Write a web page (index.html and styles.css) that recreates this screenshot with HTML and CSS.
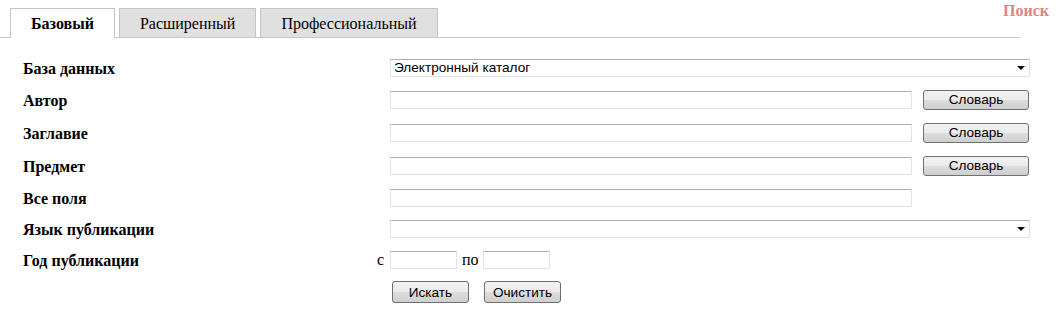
FILE: index.html
```html
<!DOCTYPE html>
<html lang="ru">
<head>
<meta charset="utf-8">
<title>Поиск</title>
<link rel="stylesheet" href="styles.css">
</head>
<body>
<div class="page">
  <div class="top">
    <div class="tabs">
      <div class="tab active">Базовый</div>
      <div class="tab">Расширенный</div>
      <div class="tab">Профессиональный</div>
    </div>
    <div class="brand">Поиск</div>
  </div>
  <form class="form">
    <div class="label">База данных</div><div class="pre"></div>
    <div class="field"><div class="select wide">Электронный каталог<span class="arrow"></span></div></div>

    <div class="label tall">Автор</div><div class="pre"></div>
    <div class="field tall"><input class="text" type="text"><button type="button" class="btn dict">Словарь</button></div>

    <div class="label tall">Заглавие</div><div class="pre"></div>
    <div class="field tall"><input class="text" type="text"><button type="button" class="btn dict">Словарь</button></div>

    <div class="label tall">Предмет</div><div class="pre"></div>
    <div class="field tall"><input class="text" type="text"><button type="button" class="btn dict">Словарь</button></div>

    <div class="label">Все поля</div><div class="pre"></div>
    <div class="field"><input class="text" type="text"></div>

    <div class="label">Язык публикации</div><div class="pre"></div>
    <div class="field"><div class="select wide"><span class="arrow"></span></div></div>

    <div class="label">Год публикации</div><div class="pre">с</div>
    <div class="field"><input class="year" type="text"><span class="po">по</span><input class="year" type="text"></div>

    <div></div><div></div>
    <div class="actions"><button type="button" class="btn act">Искать</button><button type="button" class="btn act">Очистить</button></div>
  </form>
</div>
</body>
</html>
```
FILE: styles.css
```css
html, body {
  margin: 0;
  padding: 0;
  background: #fff;
}
body {
  font-family: "Liberation Serif", "Times New Roman", serif;
  color: #000;
}
.page {
  width: 1056px;
}
.top {
  display: flex;
  align-items: flex-start;
  height: 38px;
}
.tabs {
  display: flex;
  gap: 4px;
  width: 1020px;
  flex: none;
  padding-left: 10px;
  padding-top: 8px;
  border-bottom: 1px solid #c8c8c8;
  box-sizing: border-box;
  height: 38px;
}
.tab {
  height: 29px;
  box-sizing: border-box;
  padding: 0 20px;
  border: 1px solid #c4c4c4;
  border-bottom: none;
  background: #e0e0e0;
  font-size: 16px;
  line-height: 29px;
}
.tab.active {
  background: #fff;
  font-weight: bold;
  height: 30px;
}
.brand {
  margin-left: -17px;
  margin-top: 2px;
  font-weight: bold;
  font-size: 16px;
  color: #e08585;
}
.form {
  display: grid;
  grid-template-columns: 352px 15px 1fr;
  padding-left: 23px;
  padding-top: 14px;
  align-items: center;
}
.label {
  font-weight: bold;
  font-size: 16px;
  height: 31px;
  display: flex;
  align-items: center;
  padding-top: 2px;
  box-sizing: border-box;
}
.label.tall {
  height: 33px;
}
.pre {
  font-size: 16px;
  text-align: right;
  padding-right: 6px;
  padding-top: 1px;
}
.field {
  display: flex;
  align-items: center;
  height: 31px;
}
.field.tall {
  height: 33px;
}
.text, .year, .select {
  box-sizing: border-box;
  height: 18px;
  border: 1px solid #e2e3ea;
  border-top-color: #abadb3;
  border-radius: 1px;
  background: #fff;
  margin: 0;
  padding: 0 3px;
  font-family: "Liberation Sans", Arial, sans-serif;
  font-size: 13.6px;
}
.text {
  width: 522px;
}
.select.wide {
  width: 640px;
  position: relative;
  line-height: 16px;
  padding-left: 3px;
  color: #000;
}
.arrow {
  position: absolute;
  right: 4px;
  top: 6px;
  width: 0;
  height: 0;
  border-left: 4px solid transparent;
  border-right: 4px solid transparent;
  border-top: 4px solid #000;
}
.year {
  width: 67px;
}
.po {
  font-size: 16px;
  margin: 0 4px 0 5px;
}
.btn {
  box-sizing: border-box;
  height: 20px;
  border: 1px solid #707070;
  border-radius: 3px;
  background: linear-gradient(#f2f2f2 0%, #ebebeb 50%, #dddddd 51%, #cfcfcf 100%);
  font-family: "Liberation Sans", Arial, sans-serif;
  font-size: 13.6px;
  color: #000;
  padding: 0;
  margin: 0;
}
.dict {
  width: 106px;
  margin-left: 11px;
}
.actions {
  display: flex;
  gap: 15px;
  padding-left: 2px;
  padding-top: 6px;
}
.act {
  width: 77px;
  height: 22px;
}
```
